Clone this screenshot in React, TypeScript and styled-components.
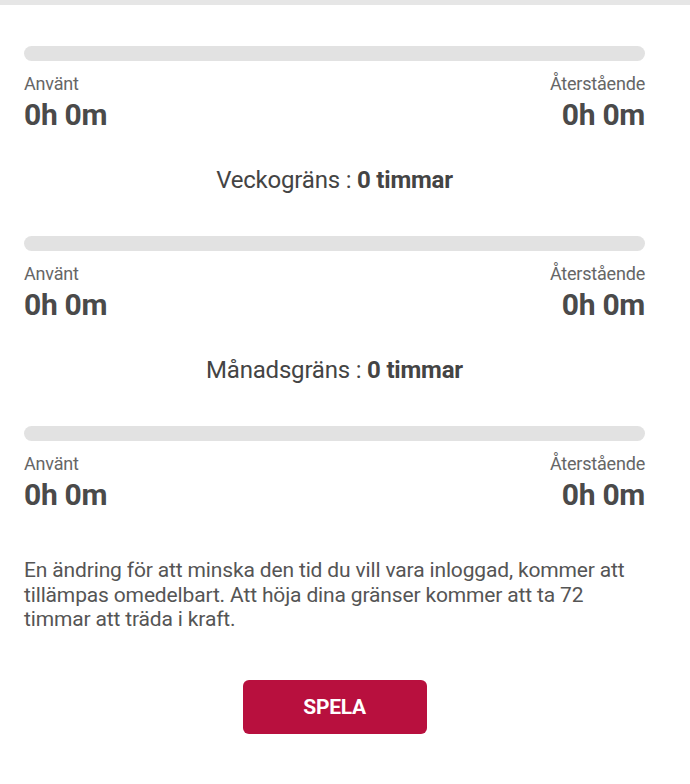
import React from 'react';
import styled, {createGlobalStyle} from 'styled-components';

const GlobalStyle = createGlobalStyle`
    html, body {
        margin: 0;
        padding: 0;
        background: #fff;
        font-family: Roboto, "Liberation Sans", sans-serif;
    }
`;

const Page = styled.div`
    width: 690px;
    min-height: 784px;
    box-sizing: border-box;
    border-top: 5px solid #e6e6e6;
    padding: 41px 45px 0 24px;
    color: #444;
`;

const Section = styled.div`
    display: flex;
    flex-direction: column;
`;

const Bar = styled.div`
    height: 15px;
    border-radius: 8px;
    background-color: #e2e2e2;
`;

const Stats = styled.div`
    display: flex;
    justify-content: space-between;
    margin-top: 12px;
`;

const Stat = styled.div<{align: 'left' | 'right'}>`
    display: flex;
    flex-direction: column;
    text-align: ${(p) => p.align};
`;

const Label = styled.div`
    font-size: 18px;
    line-height: 22px;
    color: #666;
    letter-spacing: -0.2px;
`;

const Value = styled.div`
    margin-top: 3px;
    font-size: 30px;
    line-height: 34px;
    font-weight: 700;
    color: #4a4a4a;
    letter-spacing: -0.3px;
`;

const Limit = styled.div`
    margin: 34px 0 42px;
    text-align: center;
    font-size: 24px;
    line-height: 28px;
    color: #444;
    letter-spacing: -0.2px;
    b {
        font-weight: 700;
    }
`;

const Note = styled.p`
    margin: 46px 0 0;
    font-size: 21px;
    line-height: 24.5px;
    color: #555;
    letter-spacing: -0.15px;
`;

const Actions = styled.div`
    display: flex;
    justify-content: center;
    margin-top: 48px;
`;

const PlayButton = styled.button`
    width: 184px;
    height: 54px;
    border: none;
    border-radius: 6px;
    background-color: #b8103e;
    color: #fff;
    font-family: Roboto, "Liberation Sans", sans-serif;
    font-size: 21px;
    font-weight: 700;
    letter-spacing: -0.3px;
    cursor: pointer;
`;

function Usage() {
    return (
        <Section>
            <Bar />
            <Stats>
                <Stat align="left">
                    <Label>Använt</Label>
                    <Value>0h 0m</Value>
                </Stat>
                <Stat align="right">
                    <Label>Återstående</Label>
                    <Value>0h 0m</Value>
                </Stat>
            </Stats>
        </Section>
    );
}

export default function App() {
    return (
        <Page>
            <GlobalStyle />
            <Usage />
            <Limit>
                Veckogräns : <b>0 timmar</b>
            </Limit>
            <Usage />
            <Limit>
                Månadsgräns : <b>0 timmar</b>
            </Limit>
            <Usage />
            <Note>
                En ändring för att minska den tid du vill vara inloggad, kommer att tillämpas omedelbart. Att höja dina
                gränser kommer att ta 72 timmar att träda i kraft.
            </Note>
            <Actions>
                <PlayButton>SPELA</PlayButton>
            </Actions>
        </Page>
    );
}
